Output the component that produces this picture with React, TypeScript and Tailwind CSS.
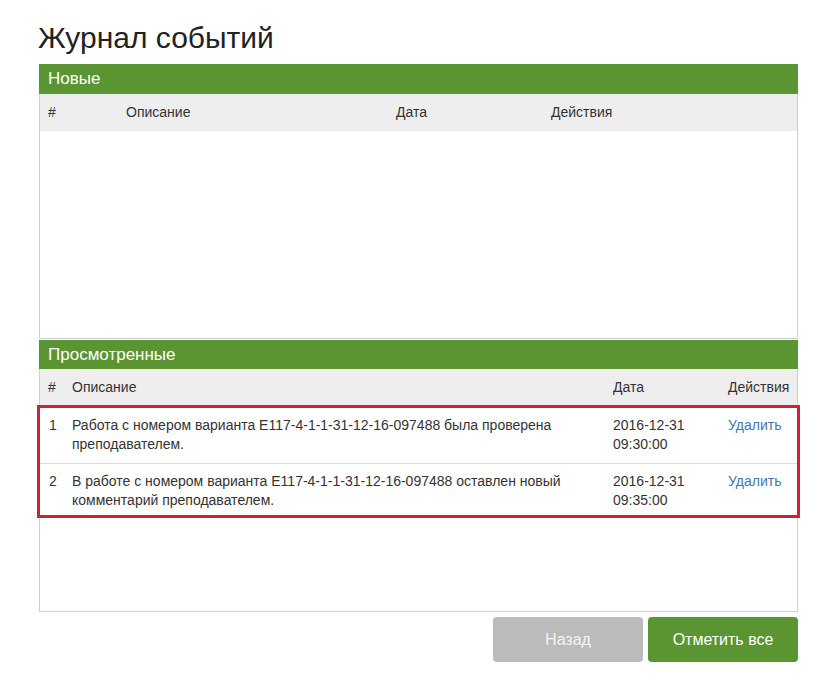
import React from "react";

interface EventRow {
  id: number;
  description: string;
  date: string;
  time: string;
}

const viewed: EventRow[] = [
  {
    id: 1,
    description:
      "Работа с номером варианта E117-4-1-1-31-12-16-097488 была проверена преподавателем.",
    date: "2016-12-31",
    time: "09:30:00",
  },
  {
    id: 2,
    description:
      "В работе с номером варианта E117-4-1-1-31-12-16-097488 оставлен новый комментарий преподавателем.",
    date: "2016-12-31",
    time: "09:35:00",
  },
];

export default function App() {
  return (
    <div className="min-h-[680px] bg-white px-[39px] pt-[20px] font-['Liberation_Sans',Arial,sans-serif] text-[14px] text-[#333]">
      <h1 className="text-[30px] leading-[36px] text-[#222] -ml-px mb-[8px]">
        Журнал событий
      </h1>

      {/* New events */}
      <div className="w-[759px] border border-t-0 border-[#cfcfcf]">
        <div className="-mx-px bg-[#5a9532] h-[30px] px-[9px] text-[17px] leading-[30px] text-white">
          Новые
        </div>
        <div className="grid grid-cols-[78px_270px_155px_1fr] bg-[#eeeeee] h-[37px] items-center">
          <div className="px-2">#</div>
          <div className="px-2">Описание</div>
          <div className="px-2">Дата</div>
          <div className="px-2">Действия</div>
        </div>
        <div className="h-[207px]"></div>
      </div>

      {/* Viewed events */}
      <div className="w-[759px] mt-px border border-t-0 border-[#cfcfcf]">
        <div className="-mx-px bg-[#5a9532] h-[29px] px-[9px] text-[17px] leading-[29px] text-white">
          Просмотренные
        </div>
        <div className="grid grid-cols-[24px_541px_115px_1fr] bg-[#eeeeee] h-[36px] items-center">
          <div className="px-2">#</div>
          <div className="px-2">Описание</div>
          <div className="px-2">Дата</div>
          <div className="px-2">Действия</div>
        </div>
        <div className="-mx-[3px] border-[3px] border-[#d3202f]">
          {viewed.map((row, index) => (
            <div
              key={row.id}
              className={
                "grid grid-cols-[24px_541px_115px_1fr] pt-[8px] leading-[19px] " +
                (index > 0 ? "border-t border-[#dddddd] pb-[5px]" : "pb-[9px]")
              }
            >
              <div className="px-2 pl-[9px]">{row.id}</div>
              <div className="px-2">{row.description}</div>
              <div className="px-2">
                {row.date}
                <br />
                {row.time}
              </div>
              <div className="px-2">
                <a href="#" className="text-[#3f78b4]">
                  Удалить
                </a>
              </div>
            </div>
          ))}
        </div>
        <div className="h-[93px]"></div>
      </div>

      {/* Buttons */}
      <div className="w-[759px] flex justify-end gap-[5px] mt-[5px]">
        <button className="w-[150px] h-[45px] rounded-[4px] bg-[#bbbbbb] text-[16px] text-[#f4f4f4]">
          Назад
        </button>
        <button className="w-[150px] h-[45px] rounded-[4px] bg-[#5a9532] text-[16px] text-white">
          Отметить все
        </button>
      </div>
    </div>
  );
}
